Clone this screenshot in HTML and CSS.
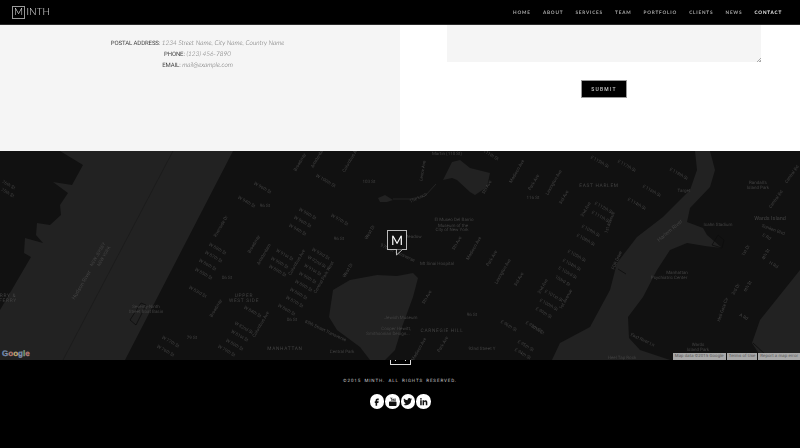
FILE: index.html
```html
<!DOCTYPE html>
<html>
<head>
  <title>Minth</title>
  <link rel="stylesheet" href="styles.css">
</head>
<body>
  <div class="navbar">
    <div class="logo"><span class="logo-box">M</span><span>INTH</span></div>
    <div class="nav-links">
      <a>Home</a>
      <a>About</a>
      <a>Services</a>
      <a>Team</a>
      <a>Portfolio</a>
      <a>Clients</a>
      <a>News</a>
      <a class="active">Contact</a>
    </div>
  </div>

  <!-- Contacto -->
  <div class="contact">
    <div class="contact-info">
      <p><b>Postal Address:</b> <i>1234 Street Name, City Name, Country Name</i></p>
      <p><b>Phone:</b> <i>(123) 456-7890</i></p>
      <p><b>Email:</b> <i>mail@example.com</i></p>
    </div>
    <form class="contact-form">
      <textarea></textarea>
      <button type="button">Submit</button>
    </form>
  </div>

  <!-- Mapa -->
  <div class="map">
    <svg class="map-canvas" width="800" height="209" viewBox="0 151 800 209">
      <rect class="land" x="0" y="151" width="800" height="209"/>
      <path class="water" d="M60 151L83 165L72 185L53 182L68 193L60 205L61 215L50 225L37 223L36 235L43 243L25 238L24 253L31 257L0 310V360H125L233 151Z"/>
      <path class="border-line" d="M173 151L63 360"/>
      <path class="pier" d="M130 320L136 325L146 305L141 303Z"/>
      <path class="water" d="M377 275L397 276L413 273L418 278L413 297L402 327L395 350L385 360H370L360 347L337 330L329 317L333 290L350 280Z"/>
      <path class="water" d="M452 162L460 160L470 168L490 173L487 187L475 195L470 192L457 180L452 178L443 180L447 172Z"/>
      <path class="water" d="M378 198L385 195L393 200L387 202L380 202Z"/>
      <path class="stream" d="M393 199L410 199L425 196L436 184"/>
      <path class="water" d="M695 151L697 170L690 190L663 217L637 237L617 263L610 290L590 327L560 343L552 360H670L640 350L629 338L628 317L643 297L657 270L670 250L687 243L705 246L722 248L707 235L703 228L687 222L690 208L710 187L715 170L710 151Z"/>
      <path class="water" d="M800 270L760 320L752 343L763 360H800Z"/>
      <path class="pier" d="M618 269L626 274"/>
      <path class="pier" d="M712 245L718 235L724 240L722 248Z"/>
      <path class="pier" d="M753 343L768 357"/>

      <text class="lbl" transform="translate(8 186) rotate(30)">76th St</text>
      <text class="lbl" transform="translate(7 194) rotate(30)">75th St</text>
      <text class="lbl lbl-big" transform="translate(83 286) rotate(-60)">Hudson River</text>
      <text class="lbl" transform="translate(99 255) rotate(-60)">NEW JERSEY</text>
      <text class="lbl" transform="translate(105 257) rotate(-60)">NEW YORK</text>
      <text class="lbl lbl-area" x="8" y="297">RRY &amp;</text>
      <text class="lbl lbl-area" x="8" y="302">FERRY</text>
      <text class="lbl" x="146" y="308">Seventy-Ninth</text>
      <text class="lbl" x="146" y="313">Street Boat Basin</text>
      <text class="lbl" transform="translate(262 189) rotate(30)">W 96th St</text>
      <text class="lbl" transform="translate(246 203) rotate(30)">W 94th St</text>
      <text class="lbl" x="265" y="207">96 St</text>
      <text class="lbl" transform="translate(222 227) rotate(-60)">Riverside Dr</text>
      <text class="lbl" transform="translate(255 245) rotate(-60)">Broadway</text>
      <text class="lbl" transform="translate(265 255) rotate(-60)">Amsterdam</text>
      <text class="lbl" transform="translate(217 250) rotate(30)">W 88th St</text>
      <text class="lbl" transform="translate(213 258) rotate(30)">W 87th St</text>
      <text class="lbl" transform="translate(207 266) rotate(30)">W 86th St</text>
      <text class="lbl" transform="translate(203 275) rotate(30)">W 85th St</text>
      <text class="lbl" x="227" y="279">86 St</text>
      <text class="lbl" transform="translate(197 293) rotate(30)">W 83rd St</text>
      <text class="lbl" transform="translate(217 309) rotate(-60)">Broadway</text>
      <text class="lbl lbl-area" x="244" y="297">UPPER</text>
      <text class="lbl lbl-area" x="244" y="302">WEST SIDE</text>
      <text class="lbl" transform="translate(252 313) rotate(30)">W 84th St</text>
      <text class="lbl" transform="translate(243 329) rotate(30)">W 82nd St</text>
      <text class="lbl" transform="translate(239 337) rotate(30)">W 81st St</text>
      <text class="lbl" transform="translate(234 346) rotate(30)">W 80th St</text>
      <text class="lbl" x="192" y="339">79 St</text>
      <text class="lbl" transform="translate(170 343) rotate(30)">W 77th St</text>
      <text class="lbl" transform="translate(165 352) rotate(30)">W 76th St</text>
      <text class="lbl" transform="translate(226 352) rotate(30)">W 79th St</text>
      <text class="lbl" transform="translate(262 325) rotate(-60)">Columbus Ave</text>

      <text class="lbl" transform="translate(301 163) rotate(-60)">Broadway</text>
      <text class="lbl" transform="translate(319 158) rotate(-60)">Amsterdam</text>
      <text class="lbl" transform="translate(352 160) rotate(-60)">Columbus Ave</text>
      <text class="lbl" transform="translate(325 182) rotate(30)">W 100th St</text>
      <text class="lbl" x="369" y="183">103 St</text>
      <text class="lbl" transform="translate(424 171) rotate(-80)">Lenox Ave</text>
      <text class="lbl" x="447" y="155">Martin (110 St)</text>
      <text class="lbl" transform="translate(488 155) rotate(30)">W 111th St</text>
      <text class="lbl" transform="translate(518 172) rotate(-60)">Madison Ave</text>
      <text class="lbl" transform="translate(488 188) rotate(-60)">5th Ave</text>
      <text class="lbl" transform="translate(535 183) rotate(-60)">Park Ave</text>
      <text class="lbl" x="533" y="199">116 St</text>
      <text class="lbl" transform="translate(419 199) rotate(-25)">The Loch</text>
      <text class="lbl" x="454" y="221">El Museo Del Barrio</text>
      <text class="lbl" x="453" y="227">Museum of the</text>
      <text class="lbl" x="452" y="231">City of New York</text>
      <text class="lbl" x="413" y="238">Meadow</text>
      <text class="lbl" transform="translate(307 215) rotate(30)">W 98th St</text>
      <text class="lbl" transform="translate(339 221) rotate(30)">W 97th St</text>
      <text class="lbl" transform="translate(302 223) rotate(30)">W 96th St</text>
      <text class="lbl" transform="translate(297 231) rotate(30)">W 94th St</text>
      <text class="lbl" x="339" y="240">96 St</text>
      <text class="lbl" transform="translate(371 233) rotate(-60)">West Dr</text>
      <text class="lbl" transform="translate(397 254) rotate(25)">97th St Transverse</text>
      <text class="lbl" x="437" y="265">Mt Sinai Hospital</text>
      <text class="lbl" transform="translate(458 244) rotate(-60)">5th Ave</text>
      <text class="lbl" transform="translate(475 249) rotate(-60)">Madison Ave</text>
      <text class="lbl" transform="translate(493 259) rotate(-60)">Park Ave</text>
      <text class="lbl" transform="translate(504 272) rotate(-60)">Lexington Ave</text>
      <text class="lbl" transform="translate(520 280) rotate(-60)">3rd Ave</text>
      <text class="lbl" transform="translate(284 256) rotate(30)">W 91st St</text>
      <text class="lbl" transform="translate(279 264) rotate(30)">W 90th St</text>
      <text class="lbl" transform="translate(277 272) rotate(30)">W 89th St</text>
      <text class="lbl" transform="translate(320 255) rotate(30)">W 93rd St</text>
      <text class="lbl" transform="translate(316 263) rotate(30)">W 92nd St</text>
      <text class="lbl" transform="translate(312 271) rotate(30)">W 91st St</text>
      <text class="lbl" transform="translate(307 279) rotate(30)">W 90th St</text>
      <text class="lbl" transform="translate(303 287) rotate(30)">W 89th St</text>
      <text class="lbl" transform="translate(298 295) rotate(30)">W 88th St</text>
      <text class="lbl" transform="translate(294 303) rotate(30)">W 87th St</text>
      <text class="lbl" transform="translate(286 311) rotate(30)">W 86th St</text>
      <text class="lbl" x="292" y="321">86 St</text>
      <text class="lbl" transform="translate(298 263) rotate(-60)">Columbus Ave</text>
      <text class="lbl" transform="translate(325 278) rotate(-60)">Central Park West</text>
      <text class="lbl" transform="translate(349 271) rotate(-60)">West Dr</text>
      <text class="lbl" transform="translate(325 332) rotate(25)">85th Street Transverse</text>
      <text class="lbl" x="401" y="319">Jewish Museum</text>
      <text class="lbl" x="396" y="330">Cooper Hewitt,</text>
      <text class="lbl" x="388" y="335">Smithsonian Design...</text>
      <text class="lbl lbl-area" x="442" y="332">CARNEGIE HILL</text>
      <text class="lbl" transform="translate(428 298) rotate(-60)">5th Ave</text>
      <text class="lbl" x="472" y="316">96 St</text>
      <text class="lbl" transform="translate(508 327) rotate(30)">E 96th St</text>
      <text class="lbl" transform="translate(533 328) rotate(30)">E 97th St</text>
      <text class="lbl lbl-area" x="285" y="350">MANHATTAN</text>
      <text class="lbl" x="342" y="353">Central Park</text>
      <text class="lbl" transform="translate(420 350) rotate(-60)">Madison Ave</text>
      <text class="lbl" transform="translate(444 345) rotate(-60)">Park Ave</text>
      <text class="lbl" x="482" y="350">92nd Street Y</text>
      <text class="lbl" transform="translate(525 347) rotate(30)">E 95th St</text>
      <text class="lbl" transform="translate(522 355) rotate(30)">E 94th St</text>

      <text class="lbl" transform="translate(599 163) rotate(30)">E 115th St</text>
      <text class="lbl" transform="translate(626 167) rotate(30)">E 117th St</text>
      <text class="lbl" transform="translate(678 175) rotate(30)">E 118th St</text>
      <text class="lbl lbl-area" x="599" y="187">EAST HARLEM</text>
      <text class="lbl" transform="translate(651 192) rotate(30)">E 116th St</text>
      <text class="lbl" x="684" y="192">Target</text>
      <text class="lbl" transform="translate(636 205) rotate(30)">E 114th St</text>
      <text class="lbl" transform="translate(603 209) rotate(30)">E 112th St</text>
      <text class="lbl" transform="translate(600 218) rotate(30)">E 111th St</text>
      <text class="lbl" transform="translate(587 210) rotate(-60)">2nd Ave</text>
      <text class="lbl" transform="translate(611 223) rotate(-70)">1st Avenue</text>
      <text class="lbl" transform="translate(590 232) rotate(30)">E 109th St</text>
      <text class="lbl" transform="translate(585 241) rotate(30)">E 108th St</text>
      <text class="lbl lbl-big" transform="translate(671 232) rotate(-40)">Harlem River</text>
      <text class="lbl" x="718" y="226">Icahn Stadium</text>
      <text class="lbl" x="758" y="184">Randall's</text>
      <text class="lbl" x="758" y="189">Island Park</text>
      <text class="lbl" transform="translate(777 200) rotate(-55)">Central Rd</text>
      <text class="lbl" transform="translate(793 175) rotate(-55)">Central Rd</text>
      <text class="lbl lbl-big" x="770" y="220">Wards Island</text>
      <text class="lbl" transform="translate(773 231) rotate(20)">Sunken Blvd</text>
      <text class="lbl" transform="translate(766 238) rotate(30)">E Rd</text>
      <text class="lbl" transform="translate(747 251) rotate(-60)">1st Dr</text>
      <text class="lbl" transform="translate(767 255) rotate(-60)">4th St</text>
      <text class="lbl" transform="translate(773 266) rotate(30)">H Rd</text>
      <text class="lbl" transform="translate(618 261) rotate(-65)">FDR Drive</text>
      <text class="lbl" transform="translate(576 257) rotate(30)">E 105th St</text>
      <text class="lbl" transform="translate(571 266) rotate(30)">E 104th St</text>
      <text class="lbl" transform="translate(567 274) rotate(30)">E 103rd St</text>
      <text class="lbl" transform="translate(562 282) rotate(30)">103rd St</text>
      <text class="lbl" transform="translate(544 287) rotate(-60)">2nd Ave</text>
      <text class="lbl" transform="translate(553 297) rotate(30)">E 101st St</text>
      <text class="lbl" transform="translate(567 300) rotate(-60)">1st Avenue</text>
      <text class="lbl" transform="translate(548 306) rotate(30)">E 100th St</text>
      <text class="lbl" transform="translate(543 314) rotate(30)">E 99th St</text>
      <text class="lbl" transform="translate(537 331) rotate(30)">97th St</text>
      <text class="lbl" x="677" y="274">Manhattan</text>
      <text class="lbl" x="669" y="279">Psychiatric Center</text>
      <text class="lbl" transform="translate(737 290) rotate(-60)">3rd Dr</text>
      <text class="lbl" transform="translate(749 287) rotate(-60)">6th St</text>
      <text class="lbl" transform="translate(724 310) rotate(-70)">Hell Gate Cir</text>
      <text class="lbl" transform="translate(743 318) rotate(30)">A Rd</text>
      <text class="lbl" transform="translate(642 341) rotate(25)">East River Ln</text>
      <text class="lbl" x="698" y="346">Wards</text>
      <text class="lbl" x="698" y="351">Island Park</text>
      <text class="lbl" x="622" y="359">Heel Tap Rock</text>
      <text class="lbl" transform="translate(555 183) rotate(-60)">Lexington Ave</text>
      <text class="lbl" transform="translate(565 198) rotate(-60)">3rd Ave</text>
    </svg>

    <div class="marker">
      <span class="marker-box">M</span>
      <svg class="marker-tail" width="12" height="7" viewBox="0 0 12 7"><path d="M1 0H11L4.500 6V0"/></svg>
    </div>

    <div class="google"><span class="g-blue">G</span><span class="g-red">o</span><span class="g-yellow">o</span><span class="g-blue">g</span><span class="g-green">l</span><span class="g-red">e</span></div>
    <div class="attribution">
      <span>Map data ©2015 Google</span>
      <span>Terms of Use</span>
      <span>Report a map error</span>
    </div>
  </div>

  <!-- Pie -->
  <div class="footer">
    <div class="footer-logo"><i></i><i></i></div>
    <p class="copyright">©2015 MINTH. ALL RIGHTS RESERVED.</p>
    <div class="social">
      <a><svg viewBox="0 0 24 24"><path d="M14 8h3V4h-3c-2.800 0-5 2.200-5 5v2H7v4h2v7h4v-7h3l1-4h-4V9c0-.6.4-1 1-1z"/></svg></a>
      <a><svg viewBox="0 0 24 24"><path d="M6 1h1.500l1 3.500 1-3.500H11L9 6.500V10H7.700V6.500zM12.800 3.500c1 0 1.700.7 1.700 1.700v3c0 1-.7 1.800-1.700 1.800s-1.700-.8-1.700-1.800v-3c0-1 .7-1.700 1.700-1.700zM15.500 3.600h1.200v5.200c0 .4.500.4 1 0V3.600H19V10h-1.300v-.5c-1 .9-2.200.7-2.200-.6zM5 11.500h14c1.400 0 2.500 1.100 2.500 2.500v6c0 1.400-1.100 2.500-2.500 2.500H5c-1.400 0-2.500-1.100-2.500-2.500v-6c0-1.400 1.100-2.500 2.500-2.500z"/></svg></a>
      <a><svg viewBox="0 0 24 24"><path d="M23 5a9 9 0 0 1-2.600.7 4.500 4.500 0 0 0 2-2.500 9 9 0 0 1-2.900 1.100 4.500 4.500 0 0 0-7.700 4.100A12.800 12.800 0 0 1 2.500 3.700a4.500 4.500 0 0 0 1.400 6 4.500 4.500 0 0 1-2-.6c0 2.200 1.500 4 3.600 4.500a4.500 4.500 0 0 1-2 .1 4.500 4.500 0 0 0 4.200 3.100A9 9 0 0 1 1 18.700 12.800 12.800 0 0 0 20.700 7.300 9 9 0 0 0 23 5z"/></svg></a>
      <a><svg viewBox="0 0 24 24"><path d="M6.900 21H3V8.500h3.900zM4.950 6.800a2.250 2.250 0 1 1 0-4.500 2.250 2.250 0 0 1 0 4.500zM21 21h-3.900v-6c0-1.500 0-3.300-2-3.300s-2.300 1.600-2.300 3.200V21H9V8.500h3.700v1.700c.5-1 1.800-2 3.700-2 3.900 0 4.600 2.600 4.600 5.900z"/></svg></a>
    </div>
  </div>
</body>
</html>
```

FILE: styles.css
```css
body {
  font-family: Roboto, "Liberation Sans", sans-serif;
  margin: 0;
  padding: 0;
  height: 448px;
  overflow: hidden;
  background-color: #000;
  text-rendering: geometricPrecision;
}

.navbar {
  display: flex;
  justify-content: space-between;
  align-items: center;
  height: 24px;
  padding: 0 18px 0 12px;
  background-color: #000;
  border-bottom: 1px solid #2a2a2a;
}

.logo {
  display: flex;
  align-items: center;
  font-family: Lato, sans-serif;
  font-weight: 300;
  font-size: 10px;
  color: #eee;
  filter: grayscale(1);
}

.logo-box {
  display: flex;
  align-items: center;
  justify-content: center;
  box-sizing: border-box;
  width: 13px;
  height: 13px;
  margin-right: 1.5px;
  border: 1px solid #999;
  font-size: 10px;
}

.nav-links {
  display: flex;
  gap: 12.2px;
  filter: grayscale(1);
}

.nav-links a {
  font-family: Lato, sans-serif;
  font-weight: 700;
  font-size: 4.7px;
  letter-spacing: 0.78px;
  text-transform: uppercase;
  color: #aaa;
}

.nav-links a.active {
  color: #eee;
}

.contact {
  display: flex;
  height: 126px;
}

.contact-info {
  box-sizing: border-box;
  width: 400px;
  padding: 13px 5px 0 0;
  background-color: #f5f5f5;
  text-align: center;
  filter: grayscale(1);
}

.contact-info p {
  height: 11px;
  margin: 0;
  font-size: 6.5px;
  line-height: 11px;
  color: #666;
}

.contact-info b {
  font-size: 6px;
  font-weight: 400;
  letter-spacing: -0.1px;
  text-transform: uppercase;
  color: #444;
}

.contact-info i {
  font-family: Lato, sans-serif;
  font-weight: 300;
  color: #666;
}

.contact-form {
  display: flex;
  flex-direction: column;
  align-items: center;
  flex: 1;
  padding: 0 39px 0 47px;
  background-color: #fff;
}

.contact-form textarea {
  box-sizing: border-box;
  width: 100%;
  height: 37px;
  margin: 0 0 18px;
  padding: 0;
  border: none;
  border-radius: 0;
  background-color: #f5f5f5;
  flex-shrink: 0;
}

.contact-form textarea::-webkit-resizer {
  background: linear-gradient(135deg, transparent 84%, #aaa 84%, #aaa 88%, transparent 88%, transparent 93%, #aaa 93%, #aaa 97%, transparent 97%);
}

.contact-form button {
  box-sizing: border-box;
  width: 46px;
  height: 18px;
  padding: 0;
  background-color: #000;
  border: 1px solid #999;
  font-family: Roboto, sans-serif;
  font-size: 5px;
  font-weight: 500;
  letter-spacing: 1.2px;
  text-transform: uppercase;
  color: #ccc;
  filter: grayscale(1);
}

.map {
  position: relative;
  height: 209px;
  overflow: hidden;
}

.map-canvas {
  display: block;
  filter: grayscale(1);
}

.land {
  fill: #111113;
}

.water {
  fill: #222223;
}

.border-line {
  fill: none;
  stroke: #1a1a1b;
  stroke-width: 0.7;
}

.stream {
  fill: none;
  stroke: #2c2c2d;
  stroke-width: 0.7;
}

.pier {
  fill: none;
  stroke: #0c0c0d;
  stroke-width: 0.8;
}

.lbl {
  font-family: Roboto, sans-serif;
  font-size: 4.5px;
  fill: #424244;
  text-anchor: middle;
}

.lbl-big {
  font-size: 5.5px;
}

.lbl-area {
  font-size: 4.8px;
  letter-spacing: 0.7px;
}

.marker {
  position: absolute;
  left: 387px;
  top: 79px;
  display: flex;
  flex-direction: column;
  filter: grayscale(1);
}

.marker-box {
  display: flex;
  align-items: center;
  justify-content: center;
  box-sizing: border-box;
  width: 20px;
  height: 20px;
  background-color: #111;
  border: 1px solid #bbb;
  font-family: Lato, sans-serif;
  font-weight: 400;
  font-size: 13px;
  color: #fff;
}

.marker-tail {
  margin: -1px 0 0 5px;
}

.marker-tail path {
  fill: #111;
  stroke: #bbb;
  stroke-width: 1;
}

.google {
  position: absolute;
  left: 2px;
  bottom: 1px;
  font-family: "Liberation Sans", sans-serif;
  font-size: 8px;
  font-weight: 700;
  line-height: 10px;
  -webkit-text-stroke: 0.3px #999;
}

.g-blue { color: #5d86c6; }
.g-red { color: #c8675c; }
.g-yellow { color: #d0b25a; }
.g-green { color: #6aa86f; }

.attribution {
  position: absolute;
  right: 0;
  bottom: 0;
  display: flex;
  gap: 1px;
  height: 7px;
  font-size: 4.3px;
  line-height: 7px;
  letter-spacing: 0.1px;
  color: #555;
}

.attribution span {
  padding: 0 2px;
  background-color: #a8a8a8;
}

.footer {
  position: relative;
  height: 88px;
  padding-top: 18px;
  box-sizing: border-box;
  background-color: #000;
  text-align: center;
}

.footer-logo {
  position: absolute;
  left: 390px;
  top: 0;
  display: flex;
  justify-content: space-between;
  box-sizing: border-box;
  width: 21px;
  height: 5px;
  padding: 0 4px;
  border: 1px solid #ddd;
  border-top: none;
}

.footer-logo i {
  width: 1px;
  height: 1px;
  background-color: #ddd;
}

.copyright {
  margin: 0 0 9px;
  font-size: 4.5px;
  line-height: 7px;
  letter-spacing: 0.9px;
  word-spacing: 1.2px;
  color: #ccc;
}

.social {
  display: flex;
  justify-content: center;
  gap: 1px;
}

.social a {
  display: flex;
  align-items: center;
  justify-content: center;
  width: 14.5px;
  height: 14.5px;
  border-radius: 50%;
  background-color: #fff;
}

.social svg {
  width: 9.5px;
  height: 9.5px;
  fill: #111;
}
```
